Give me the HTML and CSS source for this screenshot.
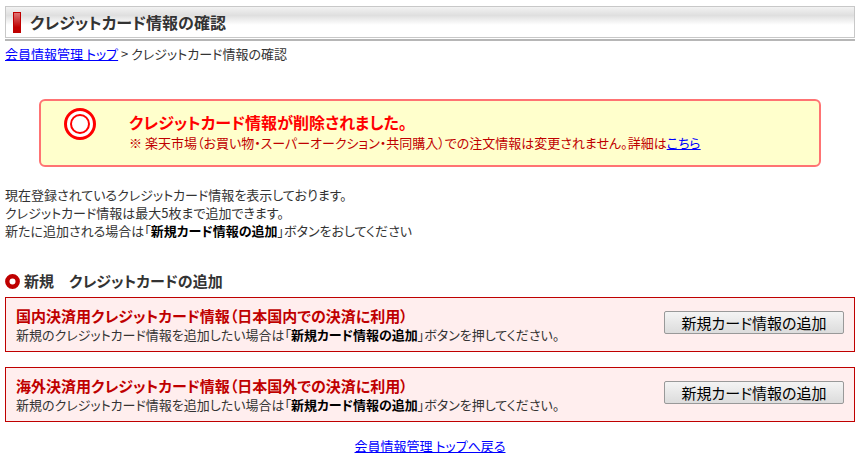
FILE: index.html
```html
<!DOCTYPE html>
<html lang="ja">
<head>
<meta charset="utf-8">
<title>クレジットカード情報の確認</title>
<link rel="stylesheet" href="styles.css">
</head>
<body>
<header class="page-header">
  <div class="title-bar">
    <span class="title-mark"></span>
    <h1>クレジットカード情報の確認</h1>
  </div>
</header>
<nav class="breadcrumb"><a href="#">会員情報管理 トップ</a> &gt; クレジットカード情報の確認</nav>
<main>
  <section class="notice">
    <svg class="notice-icon" viewBox="0 0 32 32" aria-hidden="true">
      <circle cx="16" cy="16" r="14.5" fill="#fff" stroke="#f00" stroke-width="3"/>
      <circle cx="16" cy="16" r="9" fill="#fff" stroke="#f00" stroke-width="2"/>
    </svg>
    <div>
      <h2>クレジットカード情報が削除されました。</h2>
      <p>※ 楽天市場（お買い物・スーパーオークション・共同購入）での注文情報は変更されません。詳細は<a href="#">こちら</a></p>
    </div>
  </section>
  <p class="intro">現在登録されているクレジットカード情報を表示しております。<br>クレジットカード情報は最大5枚まで追加できます。<br>新たに追加される場合は「<strong>新規カード情報の追加</strong>」ボタンをおしてください</p>
  <h2 class="section-title">
    <svg class="ring" viewBox="0 0 15 15" aria-hidden="true"><circle cx="7.5" cy="7.5" r="5.2" fill="#fff" stroke="#bf0000" stroke-width="4.4"/></svg>
    新規　クレジットカードの追加
  </h2>
  <section class="panel">
    <div>
      <h3>国内決済用クレジットカード情報（日本国内での決済に利用）</h3>
      <p>新規のクレジットカード情報を追加したい場合は「<strong>新規カード情報の追加</strong>」ボタンを押してください。</p>
    </div>
    <button type="button">新規カード情報の追加</button>
  </section>
  <section class="panel">
    <div>
      <h3>海外決済用クレジットカード情報（日本国外での決済に利用）</h3>
      <p>新規のクレジットカード情報を追加したい場合は「<strong>新規カード情報の追加</strong>」ボタンを押してください。</p>
    </div>
    <button type="button">新規カード情報の追加</button>
  </section>
</main>
<footer><a href="#">会員情報管理 トップへ戻る</a></footer>
</body>
</html>
```
FILE: styles.css
```css
* { box-sizing: border-box; }
body {
  margin: 0;
  padding: 6px 5px;
  background: #fff;
  color: #333;
  font: 13px/18px "Noto Sans CJK JP", sans-serif;
  font-feature-settings: "palt";
}
h1, h2, h3, p { margin: 0; }
a { color: #00f; }
strong { color: #000; }
.page-header { border-bottom: 2px solid #b6b6b6; padding-bottom: 1px; }
.title-bar {
  display: flex;
  align-items: center;
  gap: 9px;
  height: 32px;
  padding-left: 7px;
  border: 1px solid #c8c8c8;
  background: linear-gradient(#f2f2f2, #dfdfdf 28%, #fff 60%);
}
.title-mark {
  width: 8px;
  height: 21px;
  border: 1px solid #bf0000;
  background: linear-gradient(#df7474, #bf0000 75%);
}
h1 { font-size: 16px; line-height: 20px; }
.breadcrumb { padding: 4px 0; }
.notice {
  display: flex;
  width: 92%;
  margin: 32px auto 19px;
  padding: 7px 23px 13px;
  border: 2px solid #ff7373;
  border-radius: 6px;
  background: #ffffcc;
}
.notice-icon { flex: none; width: 32px; height: 32px; margin-right: 33px; }
.notice h2 { padding-top: 3px; color: #f00; font-size: 16px; line-height: 23px; }
.notice p { color: #bf0000; }
.section-title {
  display: flex;
  align-items: center;
  gap: 4px;
  margin: 31px 0 6px;
  font-size: 15px;
  line-height: 20px;
}
.ring { width: 15px; height: 15px; }
.panel {
  display: flex;
  justify-content: space-between;
  align-items: flex-start;
  margin-bottom: 15px;
  padding: 8px 10px 7px;
  border: 1px solid #bf0000;
  background: #ffeeee;
}
.panel h3 { color: #bf0000; font-size: 15px; line-height: 20px; }
button {
  width: 180px;
  height: 23px;
  margin-top: 5px;
  padding: 0;
  border: 1px solid #999;
  border-radius: 2px;
  background: linear-gradient(#f4f4f4, #dcdcdc);
  color: #000;
  font: 15px/20px "Noto Sans CJK JP", sans-serif;
  font-feature-settings: inherit;
}
footer { text-align: center; }
```
